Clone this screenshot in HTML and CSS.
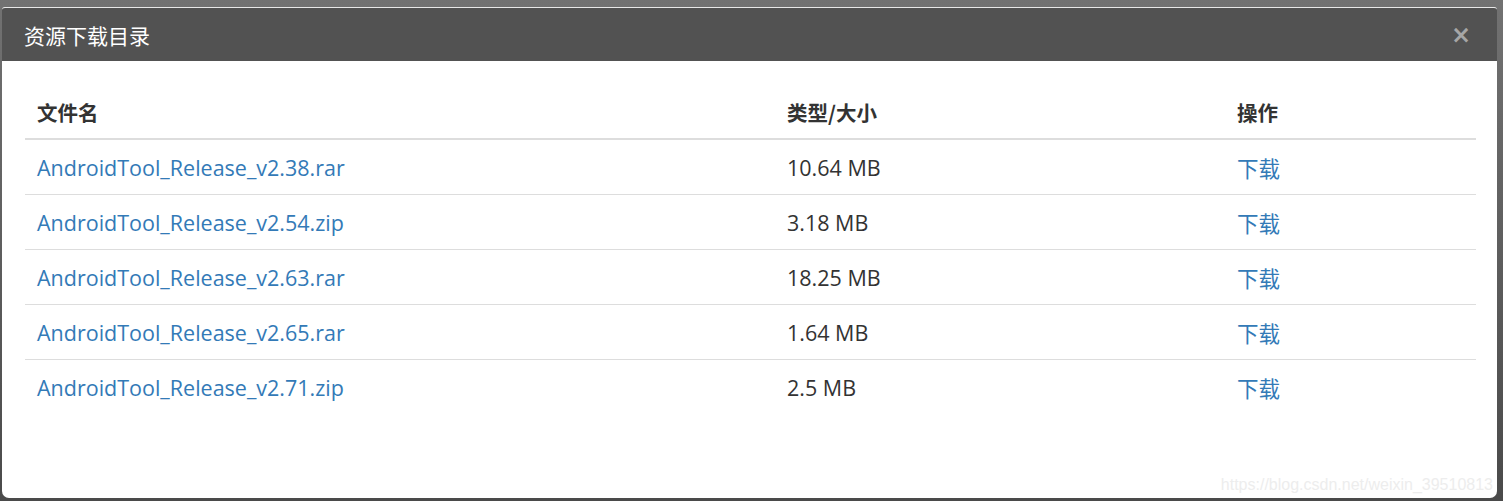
FILE: index.html
```html
<!DOCTYPE html>
<html lang="zh">
<head>
<meta charset="utf-8">
<title>资源下载目录</title>
<link rel="stylesheet" href="styles.css">
</head>
<body>
<div class="modal">
  <div class="modal-header">
    <h4 class="modal-title">资源下载目录</h4>
    <span class="close">&times;</span>
  </div>
  <div class="modal-body">
    <table class="files">
      <thead>
        <tr><th class="c1">文件名</th><th class="c2">类型/大小</th><th class="c3">操作</th></tr>
      </thead>
      <tbody>
        <tr><td><a href="#">AndroidTool_Release_v2.38.rar</a></td><td>10.64 MB</td><td><a href="#">下载</a></td></tr>
        <tr><td><a href="#">AndroidTool_Release_v2.54.zip</a></td><td>3.18 MB</td><td><a href="#">下载</a></td></tr>
        <tr><td><a href="#">AndroidTool_Release_v2.63.rar</a></td><td>18.25 MB</td><td><a href="#">下载</a></td></tr>
        <tr><td><a href="#">AndroidTool_Release_v2.65.rar</a></td><td>1.64 MB</td><td><a href="#">下载</a></td></tr>
        <tr><td><a href="#">AndroidTool_Release_v2.71.zip</a></td><td>2.5 MB</td><td><a href="#">下载</a></td></tr>
      </tbody>
    </table>
    <div class="watermark">https://blog.csdn.net/weixin_39510813</div>
  </div>
</div>
</body>
</html>
```
FILE: styles.css
```css
html, body {
  margin: 0;
  padding: 0;
  height: 100%;
}
body {
  background: linear-gradient(#727272, #4a4a4a);
  font-family: "Open Sans", "Noto Sans CJK SC", sans-serif;
  color: #333;
  overflow: hidden;
}
.modal {
  margin: 7px 6px 0 2px;
  height: 491px;
  background: #fff;
  border-top: 1px solid #e8e8e8;
  border-radius: 3px 3px 7px 7px;
  display: flex;
  flex-direction: column;
  overflow: hidden;
  box-sizing: border-box;
}
.modal-header {
  height: 53px;
  background: #525252;
  display: flex;
  align-items: center;
  justify-content: space-between;
  padding: 0 26px 0 22px;
  flex-shrink: 0;
}
.modal-title {
  margin: 0;
  color: #fff;
  font-size: 21px;
  font-weight: normal;
  font-family: "Noto Sans CJK SC", sans-serif;
}
.close {
  color: #a6a6a6;
  font-size: 24px;
  font-weight: bold;
  font-family: "DejaVu Sans", sans-serif;
  line-height: 1;
}
.modal-body {
  flex: 1;
  padding: 24px 21px 0 23px;
  position: relative;
}
.files {
  width: 100%;
  border-collapse: collapse;
  font-size: 21.5px;
}
.files th, .files td {
  text-align: left;
  padding: 0 12px;
  vertical-align: middle;
}
.files th {
  height: 53px;
  font-weight: bold;
  border-bottom: 2px solid #ddd;
  font-family: "Noto Sans CJK SC", sans-serif;
  font-size: 20.5px;
}
.files td {
  height: 54px;
  border-bottom: 1px solid #ddd;
}
.files tbody tr:last-child td {
  border-bottom: none;
}
.c1 { width: 726px; }
.c2 { width: 426px; }
.files a {
  color: #337ab7;
  text-decoration: none;
}
.watermark {
  position: absolute;
  right: 4px;
  bottom: 4px;
  font-family: "Liberation Sans", Arial, sans-serif;
  font-size: 16px;
  color: #ededed;
}
```
